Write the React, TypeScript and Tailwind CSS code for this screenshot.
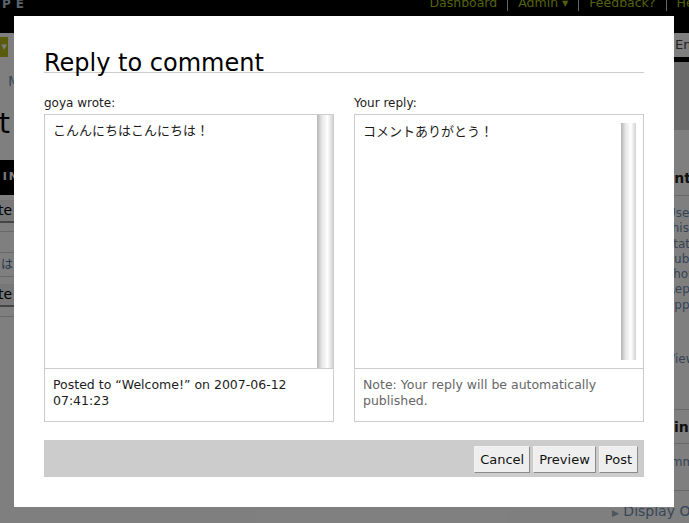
import type { ReactNode } from "react";

const sideLines = [
  "Use this page to edit",
  "this comment and its",
  "status, name and URL.",
  "Published comments are",
  "shown on your weblog.",
  "Replies to this comment",
  "appear under the entry.",
];

function PageButton({ children }: { children: ReactNode }) {
  return (
    <div className="flex h-[23px] justify-end whitespace-nowrap border-b-[2px] border-[#8a8a8a] bg-[#eeeeee] pr-[2px] text-[14px] leading-[21px] text-black">
      {children}
    </div>
  );
}

function BackgroundPage() {
  return (
    <div className="flex h-full flex-col">
      {/* top bar */}
      <header className="flex h-[33px] shrink-0 items-start justify-between bg-black">
        <span className="-mt-[2px] pl-[2px] text-[12px] font-bold leading-[12px] tracking-[5px] text-[#b4c6d2]">
          PE
        </span>
        <nav className="-mr-[16px] -mt-[5px] flex items-center text-[12.5px] leading-[16px] text-[#a8c21e]">
          <span>Dashboard</span>
          <span className="mx-[10px] h-[16px] w-px bg-[#cccccc]" />
          <span>Admin ▾</span>
          <span className="mx-[10px] h-[16px] w-px bg-[#cccccc]" />
          <span>Feedback?</span>
          <span className="mx-[10px] h-[16px] w-px bg-[#cccccc]" />
          <span>Help</span>
        </nav>
      </header>

      {/* blog selector / search */}
      <div className="flex h-[29px] shrink-0">
        <div className="flex-1 overflow-hidden bg-white pt-[4px]">
          <div className="-ml-[60px] flex h-[20px] w-[68px] items-center justify-end bg-[#b2b61a] pr-[1px] text-[7px] text-white">
            ▼
          </div>
        </div>
        <div className="w-[29px] bg-black pb-[5px] pl-[2px]">
          <div className="h-[24px] overflow-hidden whitespace-nowrap bg-white pl-[13px] text-[13px] leading-[24px] text-[#444444]">
            Entries
          </div>
        </div>
      </div>

      <div className="flex flex-1">
        {/* main column, only its left edge shows */}
        <div className="w-[14px] shrink-0 overflow-hidden bg-white">
          <div className="h-[38px] whitespace-nowrap pl-[8px] text-[14px] leading-[38px] text-[#7192b2]">
            Manage
          </div>
          <div className="flex h-[60px] justify-end whitespace-nowrap pr-[4px] pt-[4px] text-[28px] leading-[40px] text-black">
            Edit Comment
          </div>
          <div className="flex h-[35px] items-center justify-end whitespace-nowrap bg-black text-[11px] font-bold tracking-[2px] text-white">
            <span className="-mr-[6px]">POSTED IN</span>
          </div>
          <div className="h-[32px] pt-[5px]">
            <PageButton>Delete</PageButton>
          </div>
          <div className="h-[5px] border-b border-[#d0d0d0]" />
          <div className="h-[21px] border-b border-[#d0d0d0]" />
          <div className="flex h-[24px] items-center justify-end whitespace-nowrap border-b border-[#d0d0d0] pr-[1px] text-[12px] text-[#4f6f9a]">
            こんにちは
          </div>
          <div className="h-[40px] border-b border-[#d0d0d0] pt-[7px]">
            <PageButton>Delete</PageButton>
          </div>
        </div>

        <div className="flex-1 bg-white" />

        {/* sidebar */}
        <div className="w-[84px] shrink-0 overflow-hidden bg-white">
          <div className="w-[220px]">
            <div className="h-[68px] bg-[#d6d6d6]" />
            <div className="h-[35px]" />
            <div className="border-b border-[#d0d0d0] pb-[7px] pt-[3px] text-[14px] font-bold leading-[20px] text-[#222222]">
              Recent Entries
            </div>
            <div className="pt-[10px] text-[12px] leading-[15.3px] text-[#7088aa]">
              {sideLines.map((l) => (
                <div key={l} className="whitespace-nowrap pl-[62px]">
                  {l}
                </div>
              ))}
              <div className="mt-[39px] whitespace-nowrap pl-[62px]">View all entries</div>
            </div>
            <div className="mt-[42px] border-t border-[#d0d0d0] pb-[6px] pt-[7px] text-[14px] font-bold leading-[20px] text-[#222222]">
              <span className="pl-[60px]">Links</span>
            </div>
            <div className="border-t border-[#d0d0d0] pb-[20px] pt-[10px] text-[12px] leading-[16px] text-[#7088aa]">
              <span className="pl-[50px]">Comments</span>
            </div>
            <div className="border-t border-[#d0d0d0] pl-[7px] pt-[12px] text-[14px] leading-[16px] text-[#6f8fb0]">
              <span className="text-[9px] text-[#9aa8b8]">▶</span> Display Options
            </div>
          </div>
        </div>
      </div>
    </div>
  );
}

function Scrollbar({ className }: { className: string }) {
  return (
    <div
      className={`shrink-0 bg-[linear-gradient(to_right,#b4b4b4,#e6e6e6_30%,#ffffff_65%,#d2d2d2)] ${className}`}
    />
  );
}

function DialogButton({ children }: { children: ReactNode }) {
  return (
    <button
      type="button"
      className="h-[27px] border border-b-[#8a8a8a] border-l-[#f2f2f2] border-r-[#8a8a8a] border-t-[#f2f2f2] bg-[#eeeeee] px-[5px] text-[13px] leading-none text-[#111111]"
    >
      {children}
    </button>
  );
}

function ReplyDialog() {
  return (
    <div className="absolute left-[14px] top-[16px] flex h-[491px] w-[660px] flex-col bg-white px-[30px] pt-[39px] text-[#1c1c1c]">
      <h2 className="border-b border-[#cccccc] text-[24px] font-normal leading-[17px] text-black">
        Reply to comment
      </h2>

      <div className="mt-[21px] grid grid-cols-2 gap-x-[20px]">
        {/* original comment */}
        <div>
          <div className="mb-[2px] text-[12px] leading-[18px]">goya wrote:</div>
          <div className="border border-[#cccccc]">
            <div className="flex h-[253px]">
              <div className="flex-1 pl-[8px] pt-[7px] text-[13px] leading-[18px]">
                こんんにちはこんにちは！
              </div>
              <Scrollbar className="w-[16px]" />
            </div>
            <div className="h-[53px] border-t border-[#cccccc] px-[8px] pt-[8px] text-[12.5px] leading-[16px]">
              Posted to “Welcome!” on 2007-06-12 07:41:23
            </div>
          </div>
        </div>

        {/* reply */}
        <div>
          <div className="mb-[2px] text-[12px] leading-[18px]">Your reply:</div>
          <div className="border border-[#cccccc]">
            <div className="flex h-[253px] py-[8px] pl-[8px] pr-[7px]">
              <div className="flex-1 text-[13px] leading-[18px]">コメントありがとう！</div>
              <Scrollbar className="w-[15px]" />
            </div>
            <div className="h-[53px] border-t border-[#cccccc] px-[8px] pt-[8px] text-[12.5px] leading-[16px] text-[#666666]">
              Note: Your reply will be automatically published.
            </div>
          </div>
        </div>
      </div>

      <div className="mt-[18px] flex h-[37px] items-start justify-end gap-[3px] bg-[#cccccc] pr-[6px] pt-[6px]">
        <DialogButton>Cancel</DialogButton>
        <DialogButton>Preview</DialogButton>
        <DialogButton>Post</DialogButton>
      </div>
    </div>
  );
}

export default function App() {
  return (
    <div className="relative h-[523px] w-[689px] overflow-hidden bg-white font-['DejaVu_Sans','Noto_Sans_CJK_JP',sans-serif]">
      <BackgroundPage />
      <div className="absolute inset-0 bg-black/50" />
      <ReplyDialog />
    </div>
  );
}
